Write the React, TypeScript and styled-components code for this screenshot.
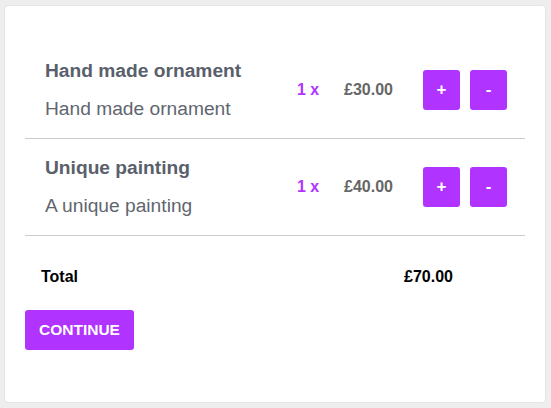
import React from "react";
import styled, { createGlobalStyle } from "styled-components";

const Global = createGlobalStyle`
  html, body { margin: 0; padding: 0; background: #eeeeee; }
  body { font-family: "Liberation Sans", Arial, sans-serif; }
`;

const Page = styled.div`
  padding: 5px 5px 4px 4px;
`;

const Card = styled.div`
  background: #ffffff;
  border: 1px solid #e4e4e4;
  border-radius: 4px;
  min-height: 398px;
  box-sizing: border-box;
  padding: 36px 20px 20px;
`;

const List = styled.div`
  display: flex;
  flex-direction: column;
`;

const Row = styled.div`
  display: flex;
  align-items: center;
  padding: 18px 18px 18px 20px;
  border-bottom: 1px solid #cccccc;
`;

const Info = styled.div`
  width: 252px;
  display: flex;
  flex-direction: column;
`;

const Title = styled.div`
  font-size: 19.2px;
  line-height: 22px;
  font-weight: 700;
  color: #59606b;
  margin-bottom: 16px;
`;

const Desc = styled.div`
  font-size: 19.2px;
  line-height: 22px;
  color: #5f6670;
`;

const Qty = styled.div`
  width: 47px;
  font-size: 16px;
  font-weight: 700;
  color: #b133ff;
`;

const Price = styled.div`
  width: 79px;
  font-size: 16px;
  font-weight: 700;
  color: #666666;
`;

const Buttons = styled.div`
  display: flex;
  gap: 10px;
`;

const SmallButton = styled.button`
  width: 37px;
  height: 40px;
  border: none;
  border-radius: 3px;
  background: #b133ff;
  color: #ffffff;
  font-family: "Liberation Sans", Arial, sans-serif;
  font-size: 17px;
  font-weight: 700;
  padding: 0;
  cursor: pointer;
`;

const TotalRow = styled.div`
  display: flex;
  align-items: center;
  padding: 32px 16px 0;
  font-size: 16px;
  line-height: 18px;
  font-weight: 700;
  color: #000000;
`;

const TotalLabel = styled.div`
  width: 363px;
`;

const Continue = styled.button`
  margin-top: 24px;
  height: 40px;
  padding: 0 14px;
  border: none;
  border-radius: 3px;
  background: #b133ff;
  color: #ffffff;
  font-family: "Liberation Sans", Arial, sans-serif;
  font-size: 15.5px;
  font-weight: 700;
  text-transform: uppercase;
  cursor: pointer;
`;

const items = [
  { title: "Hand made ornament", desc: "Hand made ornament", qty: 1, price: "£30.00" },
  { title: "Unique painting", desc: "A unique painting", qty: 1, price: "£40.00" },
];

export default function App() {
  return (
    <Page>
      <Global />
      <Card>
        <List>
          {items.map((it) => (
            <Row key={it.title}>
              <Info>
                <Title>{it.title}</Title>
                <Desc>{it.desc}</Desc>
              </Info>
              <Qty>{it.qty} x</Qty>
              <Price>{it.price}</Price>
              <Buttons>
                <SmallButton>+</SmallButton>
                <SmallButton>-</SmallButton>
              </Buttons>
            </Row>
          ))}
        </List>
        <TotalRow>
          <TotalLabel>Total</TotalLabel>
          <div>£70.00</div>
        </TotalRow>
        <Continue>Continue</Continue>
      </Card>
    </Page>
  );
}
